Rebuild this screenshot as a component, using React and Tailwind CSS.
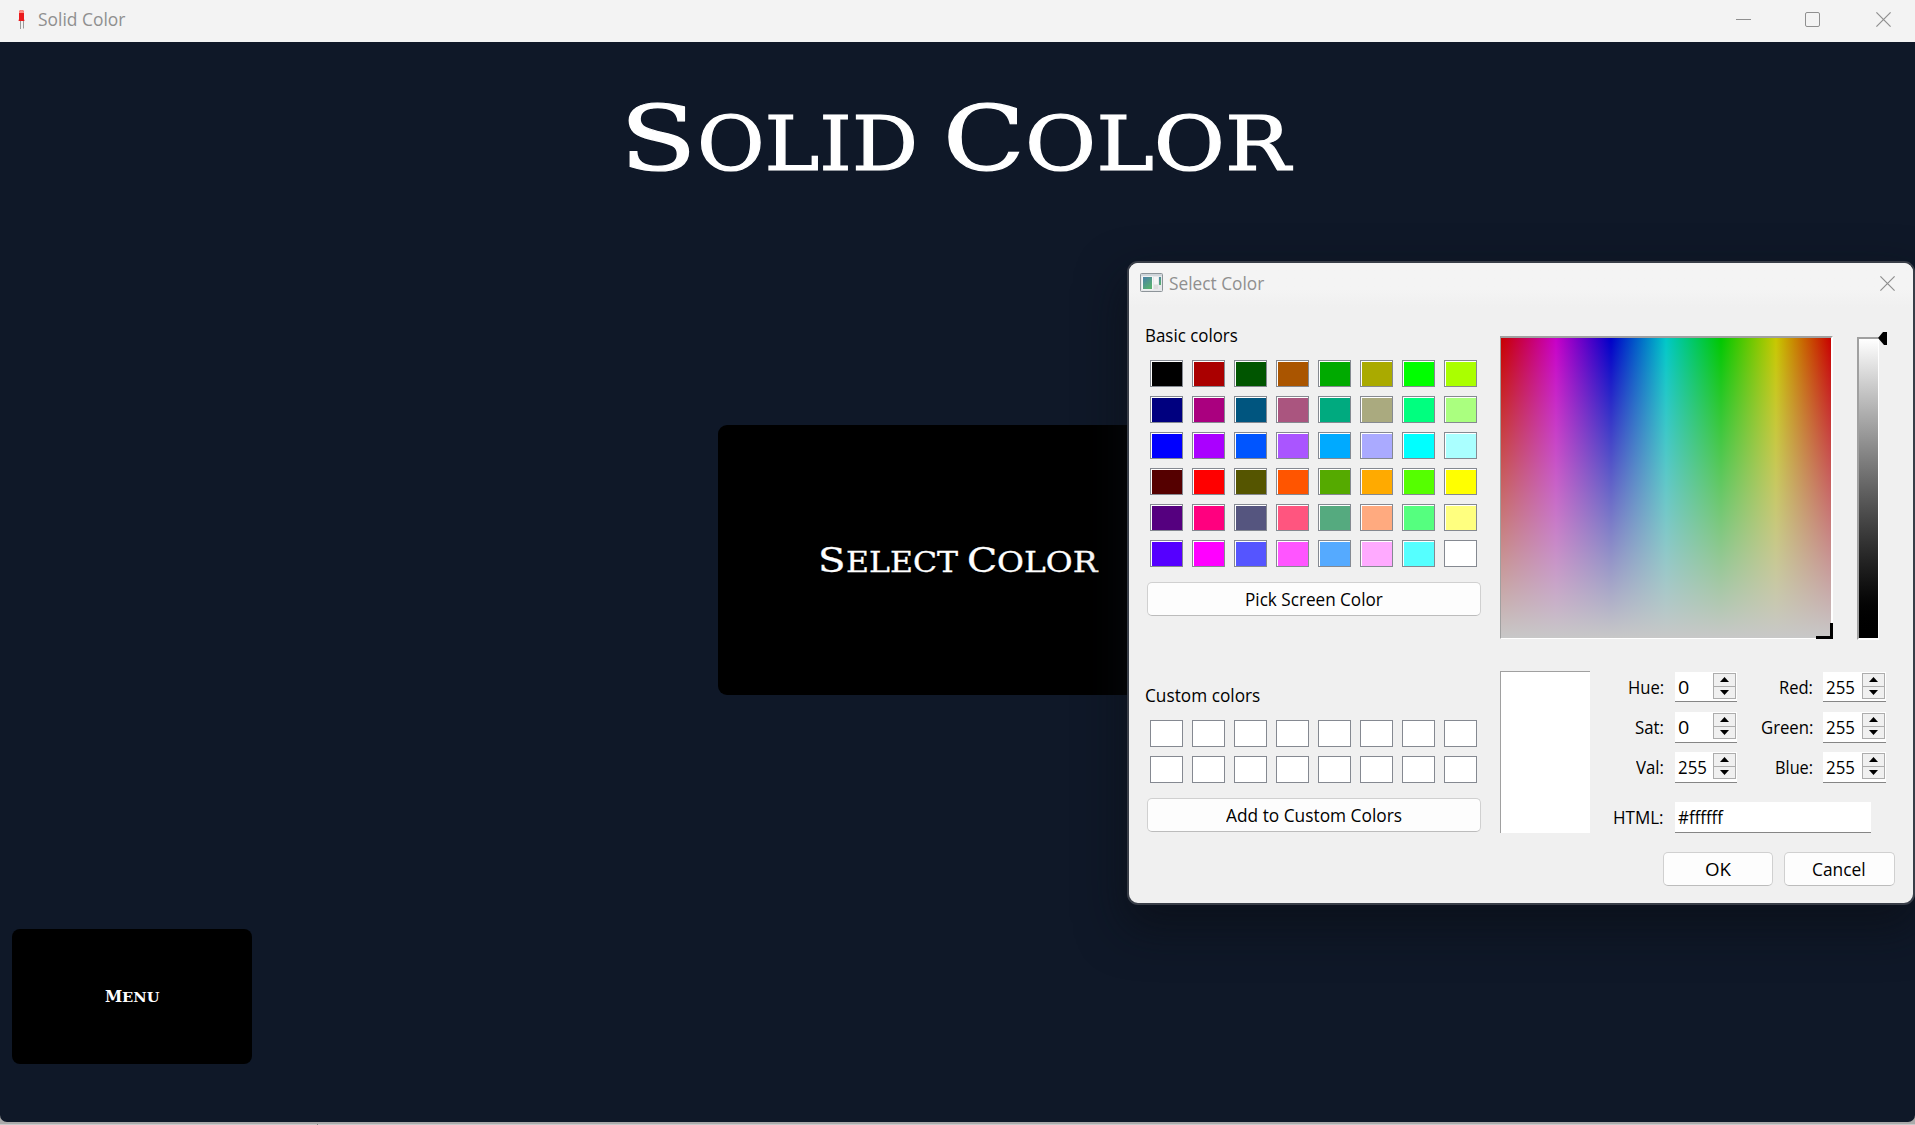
import { useLayoutEffect, useRef, useState } from "react";

// Every column pair shares its green steps; the first three rows use red 00/aa, the last three 55/ff.
const levels = (r1, r2) =>
  ["00", "7f", "ff"].flatMap((b) =>
    ["00", "55", "aa", "ff"].flatMap((g) => [`#${r1}${g}${b}`, `#${r2}${g}${b}`])
  );
const BASIC = [...levels("00", "aa"), ...levels("55", "ff")];

// Text squeezed or stretched horizontally to a set width.
function Fit({ w, className = "", children }) {
  const ref = useRef(null);
  const [scale, setScale] = useState(1);
  useLayoutEffect(() => {
    setScale(w / ref.current.offsetWidth);
  }, [w]);
  return (
    <span className="inline-block text-left" style={{ width: w }}>
      <span
        ref={ref}
        className={`inline-block origin-left whitespace-nowrap ${className}`}
        style={{ transform: `scaleX(${scale})` }}
      >
        {children}
      </span>
    </span>
  );
}

function CloseIcon() {
  return (
    <svg width="15" height="15" viewBox="0 0 15 15" fill="none" stroke="#8f8f8f" strokeWidth="1.2">
      <path d="M.4.4l14.2 14.2M14.6.4L.4 14.6" />
    </svg>
  );
}

function Swatches({ colors }) {
  return (
    <div className="ml-1 grid w-[327px] grid-cols-[repeat(8,33px)] gap-[9px]">
      {colors.map((c, i) => (
        <div key={i} className="h-[27px] border border-[#858991] bg-white pt-px pl-px">
          <div className="h-full w-full" style={{ backgroundColor: c }} />
        </div>
      ))}
    </div>
  );
}

function Button({ w, className, children }) {
  return (
    <button
      className={`flex h-[34px] items-center justify-center rounded-[5px] border border-[#d0d0d0] border-b-[#bcbcbc] bg-[#fdfdfd] leading-6 ${className}`}
    >
      <Fit w={w}>{children}</Fit>
    </button>
  );
}

function Spin({ value, w, className }) {
  return (
    <div className={`flex h-full justify-between border-b border-[#868686] bg-white pl-[3px] ${className}`}>
      <div className="flex items-center pt-px">
        <Fit w={w}>{value}</Fit>
      </div>
      <div className="mt-px mr-px flex h-[26px] w-[23px] flex-col border border-[#adadad] bg-[#f0f0f0]">
        <div className="flex flex-1 items-center justify-center border-b border-[#adadad]">
          <svg width="9" height="5" viewBox="0 0 9 5">
            <path d="M0 5L4.5 0L9 5Z" />
          </svg>
        </div>
        <div className="flex flex-1 items-center justify-center">
          <svg width="9" height="5" viewBox="0 0 9 5">
            <path d="M0 0L4.5 5L9 0Z" />
          </svg>
        </div>
      </div>
    </div>
  );
}

function FieldRow({ className, a, b }) {
  return (
    <div className={`flex ${className}`}>
      <div className="flex w-[74px] items-center justify-end">
        <Fit w={a[1]}>{a[0]}</Fit>
      </div>
      <Spin className="ml-[11px] w-[62px]" value={a[2]} w={a[3]} />
      <div className="flex w-[76px] items-center justify-end">
        <Fit w={b[1]}>{b[0]}</Fit>
      </div>
      <Spin className="ml-[10px] w-[63px]" value="255" w={29} />
    </div>
  );
}

function ColorDialog() {
  return (
    <div className="absolute top-[261px] left-[1127px] flex h-[644px] w-[788px] flex-col overflow-hidden rounded-[11px] border-2 border-[#393e48] bg-[#f0f0f0] text-black">
      <div className="flex h-[44px] shrink-0 bg-linear-to-b from-[#f4f4f4] from-60% to-[#f0f0f0] pl-[11px]">
        <svg className="mt-[10px]" width="23" height="19" viewBox="0 0 23 19">
          <defs>
            <linearGradient id="pane" x1="0" y1="0" x2=".6" y2="1">
              <stop offset="0" stopColor="#4a7fa8" />
              <stop offset="1" stopColor="#58b070" />
            </linearGradient>
          </defs>
          <rect x=".5" y=".5" width="22" height="18" rx="1" fill="#e6e8ea" stroke="#8d9499" />
          <rect x="1" y="1" width="21" height="2" fill="#cfd5da" />
          <rect x="2" y="3.5" width="11" height="13" fill="#f8f8f8" />
          <rect x="3" y="4" width="9" height="12" fill="url(#pane)" />
          <rect x="14" y="4" width="4" height="7" fill="#f5f5f5" />
          <rect x="14" y="12" width="4" height="4" fill="#dcdcdc" />
          <rect x="19" y="4" width="2" height="8" fill="url(#pane)" />
        </svg>
        <div className="mt-[8px] ml-[6px] leading-6 text-[#8f8f8f]">
          <Fit w={95}>Select Color</Fit>
        </div>
        <div className="mt-[13px] mr-[18px] ml-auto">
          <CloseIcon />
        </div>
      </div>
      <div className="flex">
        <div className="ml-[17px] w-[335px] pt-4">
          <div className="mb-[13px] -ml-px h-6 leading-6">
            <Fit w={93}>Basic colors</Fit>
          </div>
          <Swatches colors={BASIC} />
          <Button w={138} className="mt-[15px] ml-px w-[334px]">Pick Screen Color</Button>
          <div className="mt-[67px] mb-[13px] -ml-px h-6 leading-6">
            <Fit w={115}>Custom colors</Fit>
          </div>
          <Swatches colors={Array(16).fill("#ffffff")} />
          <Button w={176} className="mt-[15px] ml-px w-[334px]">Add to Custom Colors</Button>
        </div>
        <div className="ml-[19px] pt-[29px]">
          <div className="flex h-[304px]">
            <div className="relative h-[303px] w-[333px] border-t-2 border-r-2 border-b border-l border-t-[#a0a0a0] border-r-white border-b-white border-l-[#a0a0a0]">
              <div className="h-full w-full bg-[linear-gradient(to_bottom,rgba(200,200,200,0),rgb(200,200,200)),linear-gradient(to_right,#c80000,#c800c8,#0000c8,#00c8c8,#00c800,#c8c800,#c80000)]" />
              <div className="absolute -right-[2px] -bottom-px h-4 w-[17px] border-r-[3px] border-b-[3px] border-black" />
            </div>
            <div className="mt-px ml-6 h-[303px] w-[22px] border-t-2 border-r border-b-2 border-l-2 border-t-[#a0a0a0] border-r-white border-b-white border-l-[#a0a0a0] bg-linear-to-b from-white to-black bg-origin-padding" />
            <svg className="-ml-px -mt-[4px]" width="9" height="13" viewBox="0 0 9 13">
              <path d="M0 6L5 0H9V13H6Z" />
            </svg>
          </div>
          <div className="mt-[31px] flex">
            <div className="h-[162px] w-[90px] border-t border-l border-[#a0a0a0] bg-white" />
            <div>
              <FieldRow className="mt-px h-[30px]" a={["Hue:", 36, "0", 11]} b={["Red:", 34]} />
              <FieldRow className="mt-[10px] h-[31px]" a={["Sat:", 29, "0", 11]} b={["Green:", 52]} />
              <FieldRow className="mt-[9px] h-[31px]" a={["Val:", 28, "255", 29]} b={["Blue:", 38]} />
              <div className="mt-[19px] flex h-[31px]">
                <div className="flex w-[74px] items-center justify-end">
                  <Fit w={51}>HTML:</Fit>
                </div>
                <div className="ml-[11px] flex w-[196px] items-center border-b border-[#868686] bg-white pt-px pl-[3px]">
                  <Fit w={45}>#ffffff</Fit>
                </div>
              </div>
            </div>
          </div>
          <div className="mt-[19px] ml-[163px] flex gap-[11px]">
            <Button w={26} className="w-[110px] pr-px">OK</Button>
            <Button w={54} className="w-[111px] pr-px">Cancel</Button>
          </div>
        </div>
      </div>
    </div>
  );
}

// A word in large and small capitals.
function Caps({ first, rest, w1, w2, big, small }) {
  return (
    <span className="inline-flex items-baseline">
      <Fit w={w1} className={big}>{first}</Fit>
      <Fit w={w2} className={`uppercase ${small}`}>{rest}</Fit>
    </span>
  );
}

export default function App() {
  return (
    <div className="relative flex h-[1125px] w-[1915px] flex-col overflow-hidden bg-[#aaaaaa] font-['Open_Sans',sans-serif] text-[18px]">
      <header className="flex h-[42px] shrink-0 bg-[#f3f3f3] text-[#8f8f8f]">
        <svg className="mt-[9px] ml-[17px]" width="9" height="21" viewBox="0 0 9 21">
          <path d="M3.5 12V20M6.500 12V19.500" stroke="#9a9a9a" strokeWidth="1" />
          <path d="M2 3Q2 1 4.500 1T7 3V10L7.500 12H1.500L2 10Z" fill="#ea1a1c" />
          <path d="M2 3Q2 1 4.500 1T7 3V4H2Z" fill="#ff8a80" />
        </svg>
        <div className="mt-[7px] ml-3 leading-6">
          <Fit w={87}>Solid Color</Fit>
        </div>
        <div className="mt-3 mr-6 ml-auto flex h-[15px]">
          <div className="mt-[7px] h-px w-[15px] bg-[#8f8f8f]" />
          <div className="ml-[54px] h-[15px] w-[15px] rounded-[2px] border border-[#8f8f8f]" />
          <div className="ml-14">
            <CloseIcon />
          </div>
        </div>
      </header>
      <main className="relative flex h-[1080px] shrink-0 flex-col overflow-hidden rounded-b-[7px] bg-[#0f1828] font-['DejaVu_Serif',serif] text-white">
        <h1 className="mt-[37px] ml-[620px] flex h-[120px] gap-[25px] leading-[120px] [-webkit-text-stroke:1.2px_white]">
          <Caps first="S" rest="olid" w1={77} w2={221} big="text-[90px]" small="text-[75px]" />
          <Caps first="C" rest="olor" w1={82} w2={265} big="text-[90px]" small="text-[75px]" />
        </h1>
        <button className="mt-[226px] ml-[718px] flex h-[270px] w-[480px] items-center justify-center gap-[9px] rounded-[9px] bg-black pt-[7px] leading-10 [-webkit-text-stroke:0.3px_white]">
          <Caps first="S" rest="elect" w1={28} w2={112} big="text-[33px]" small="text-[27px]" />
          <Caps first="C" rest="olor" w1={30} w2={101} big="text-[33px]" small="text-[27px]" />
        </button>
        <button className="mt-[234px] ml-3 flex h-[135px] w-[240px] items-center justify-center rounded-[8px] bg-black leading-6">
          <Caps first="M" rest="enu" w1={17} w2={37} big="text-[16.5px] font-bold" small="text-[13.5px] font-bold" />
        </button>
        <div className="absolute top-[219px] left-[1127px] h-[644px] w-[788px] rounded-[11px] shadow-[0_20px_45px_4px_rgba(10,14,20,0.6)]" />
      </main>
      <footer className="flex h-[3px] flex-col justify-end">
        <div className="h-px bg-[#c9c9c9] pl-[317px]">
          <div className="h-px w-px bg-[#808080]" />
        </div>
      </footer>
      <ColorDialog />
    </div>
  );
}
